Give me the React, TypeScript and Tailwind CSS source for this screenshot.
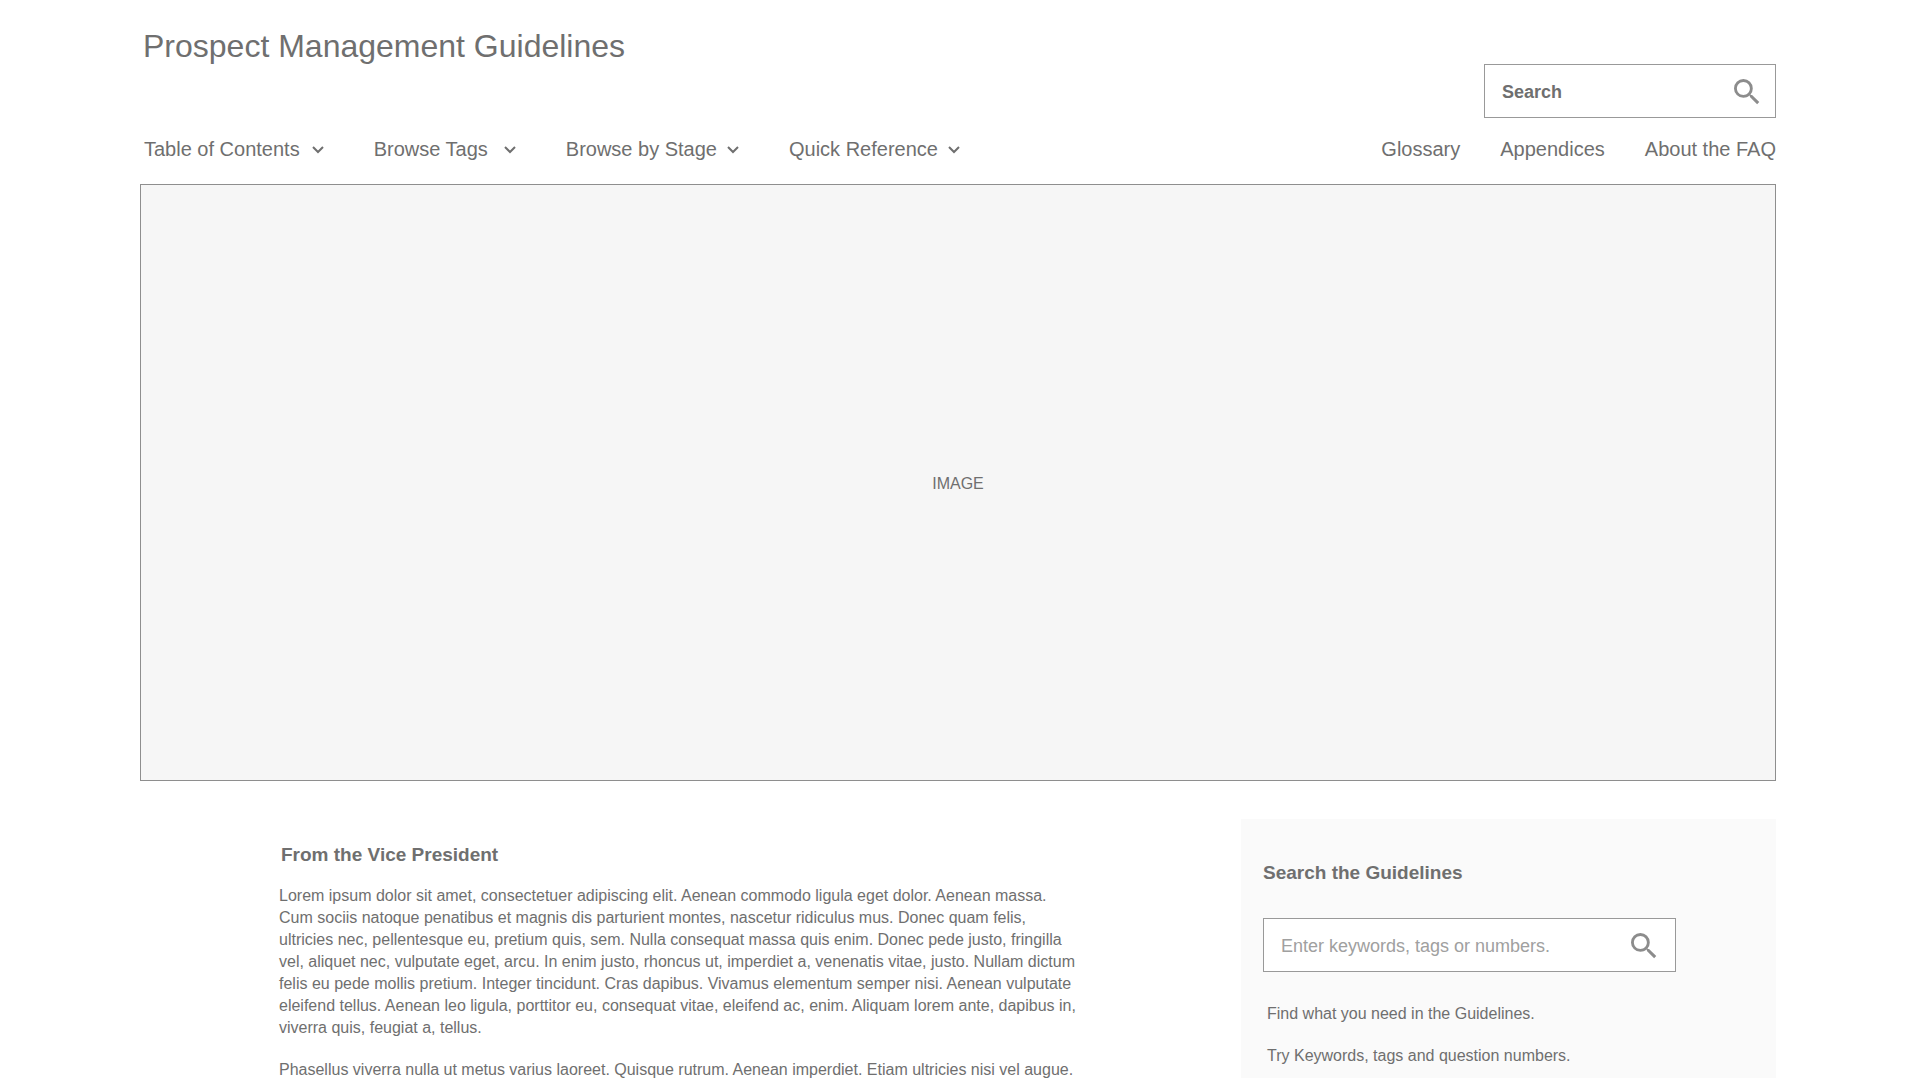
function SearchIcon() {
  return (
    <svg viewBox="3 3 18 18" fill="currentColor" className="size-[26px]" aria-hidden="true">
      <path d="M15.5 14h-.79l-.28-.27A6.471 6.471 0 0 0 16 9.5 6.5 6.5 0 1 0 9.5 16c1.61 0 3.09-.59 4.23-1.57l.27.28v.79l5 4.99L20.49 19l-4.99-5zm-6 0C7.01 14 5 11.99 5 9.5S7.01 5 9.5 5 14 7.01 14 9.5 11.99 14 9.5 14z" />
    </svg>
  );
}

function Chevron() {
  return (
    <svg viewBox="0 0 12 8" fill="none" stroke="currentColor" strokeWidth="2" className="mt-0.5 h-2 w-3" aria-hidden="true">
      <path d="M1 1l5 5 5-5" />
    </svg>
  );
}

const menus = [
  { label: 'Table of Contents', gap: 'gap-3' },
  { label: 'Browse Tags', gap: 'gap-4' },
  { label: 'Browse by Stage', gap: 'gap-2.5' },
  { label: 'Quick Reference', gap: 'gap-2.5' },
];

export default function App() {
  return (
    <div className="h-screen overflow-hidden bg-white px-[140px] font-['Liberation_Sans',Arial,sans-serif] text-[#6f6f6f]">
      <header>
        <div className="flex items-start justify-between">
          <h1 className="pt-[26px] pl-[3px] text-[32px] leading-10">Prospect Management Guidelines</h1>
          <form className="mt-16 flex h-[54px] w-[292px] items-center border border-[#999] pt-0.5 pr-[15px] pl-[17px]" onSubmit={(e) => e.preventDefault()}>
            <input
              aria-label="Search"
              placeholder="Search"
              className="min-w-0 flex-1 text-[18px] font-bold outline-none placeholder:text-[#6f6f6f] placeholder:opacity-100"
            />
            <button type="submit" aria-label="Submit search" className="text-[#8c8c8c]">
              <SearchIcon />
            </button>
          </form>
        </div>
        <nav className="flex h-[66px] items-center justify-between pb-1 pl-1 text-[20px] leading-6 whitespace-nowrap">
          <div className="flex gap-[50px]">
            {menus.map((m) => (
              <button key={m.label} type="button" className={`flex items-center ${m.gap}`}>
                {m.label}
                <Chevron />
              </button>
            ))}
          </div>
          <div className="flex gap-10">
            <a href="#glossary">Glossary</a>
            <a href="#appendices">Appendices</a>
            <a href="#faq">About the FAQ</a>
          </div>
        </nav>
      </header>

      <div className="flex h-[597px] items-center justify-center border border-[#8e8e8e] bg-[#f6f6f6] pt-0.5 text-[16px]">IMAGE</div>

      <main className="flex items-start justify-between pt-[38px]">
        <article className="max-w-[942px] pt-[22px] pl-[139px]">
          <h2 className="pl-0.5 text-[19px] leading-7 font-bold">From the Vice President</h2>
          <div className="space-y-5 pt-4 text-[16px] leading-[22px]">
            <p>
              Lorem ipsum dolor sit amet, consectetuer adipiscing elit. Aenean commodo ligula eget dolor. Aenean massa. Cum sociis natoque
              penatibus et magnis dis parturient montes, nascetur ridiculus mus. Donec quam felis, ultricies nec, pellentesque eu, pretium
              quis, sem. Nulla consequat massa quis enim. Donec pede justo, fringilla vel, aliquet nec, vulputate eget, arcu. In enim
              justo, rhoncus ut, imperdiet a, venenatis vitae, justo. Nullam dictum felis eu pede mollis pretium. Integer tincidunt. Cras
              dapibus. Vivamus elementum semper nisi. Aenean vulputate eleifend tellus. Aenean leo ligula, porttitor eu, consequat vitae,
              eleifend ac, enim. Aliquam lorem ante, dapibus in, viverra quis, feugiat a, tellus.
            </p>
            <p>Phasellus viverra nulla ut metus varius laoreet. Quisque rutrum. Aenean imperdiet. Etiam ultricies nisi vel augue.</p>
          </div>
        </article>

        <aside className="h-[300px] w-[535px] shrink-0 bg-[#fafafa] pt-10 pl-[22px]">
          <h2 className="text-[19px] leading-7 font-bold">Search the Guidelines</h2>
          <form className="mt-[31px] flex h-[54px] w-[413px] items-center border border-[#999] bg-white pt-0.5 pr-[18px] pl-[17px]" onSubmit={(e) => e.preventDefault()}>
            <input
              aria-label="Enter keywords, tags or numbers."
              placeholder="Enter keywords, tags or numbers."
              className="min-w-0 flex-1 text-[18px] outline-none placeholder:text-[#a0a0a0] placeholder:opacity-100"
            />
            <button type="submit" aria-label="Submit keywords" className="text-[#8c8c8c]">
              <SearchIcon />
            </button>
          </form>
          <div className="space-y-5 pt-[31px] pl-1 text-[16px] leading-[22px]">
            <p>Find what you need in the Guidelines.</p>
            <p>Try Keywords, tags and question numbers.</p>
          </div>
        </aside>
      </main>
    </div>
  );
}
